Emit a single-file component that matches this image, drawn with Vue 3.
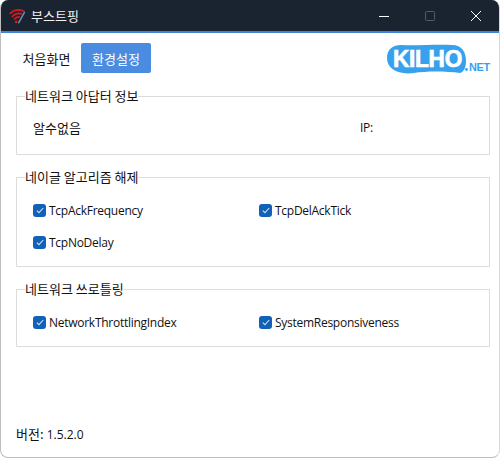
<script setup>
const nagle = ['TcpAckFrequency', 'TcpDelAckTick', 'TcpNoDelay']
const throttle = ['NetworkThrottlingIndex', 'SystemResponsiveness']
</script>

<template>
  <div class="window">
    <header class="titlebar">
      <svg class="app-icon" width="17" height="17" viewBox="0 0 20 20" fill="none">
        <path d="M1.5 7.5C6 3 12 2.5 17.5 5" stroke="#d8181f" stroke-width="2.2" stroke-linecap="round" />
        <path d="M4 11C7.5 7.5 11 7 14.5 8" stroke="#d8181f" stroke-width="2.2" stroke-linecap="round" />
        <path d="M6.5 14C8.5 12 10 11.5 12 11.5" stroke="#d8181f" stroke-width="2" stroke-linecap="round" />
        <circle cx="8.5" cy="17.5" r="1.7" fill="#d8181f" />
        <path d="M18 6.5L11.5 18.5" stroke="#6f8ba8" stroke-width="1.8" stroke-linecap="round" />
      </svg>
      <span class="app-title">부스트핑</span>
      <div class="controls">
        <span class="ctl"><svg width="12" height="12" viewBox="0 0 12 12"><path d="M1 6.5H11" stroke="#fff" /></svg></span>
        <span class="ctl"><svg width="12" height="12" viewBox="0 0 12 12"><rect x="1.5" y="1.5" width="9" height="9" rx="1" fill="none" stroke="#555b63" /></svg></span>
        <span class="ctl"><svg width="12" height="12" viewBox="0 0 12 12"><path d="M1 1L11 11M11 1L1 11" stroke="#fff" /></svg></span>
      </div>
    </header>

    <main class="content">
      <nav class="tabs">
        <span class="tab">처음화면</span>
        <span class="tab active">환경설정</span>
        <svg class="logo" width="106" height="32" viewBox="0 0 106 32">
          <path d="M1 15C1 6 7 2 15 2C30 3 50 1 66 2C76 2 80 9 80 18C80 24 78 29 74 30C60 28 40 28 28 30C12 32 1 26 1 15Z" fill="#36a2ee" />
          <text class="logo-main" x="7" y="24" textLength="69" lengthAdjust="spacingAndGlyphs">KILHO</text>
          <circle cx="80.5" cy="26.5" r="1.4" fill="#36a2ee" />
          <text class="logo-net" x="83" y="28" textLength="21" lengthAdjust="spacingAndGlyphs">NET</text>
        </svg>
      </nav>

      <fieldset class="group adapter">
        <legend>네트워크 아답터 정보</legend>
        <div class="row">
          <span class="cell">알수없음</span>
          <span class="ip">IP:</span>
        </div>
      </fieldset>

      <fieldset class="group nagle">
        <legend>네이글 알고리즘 해제</legend>
        <div class="grid">
          <label v-for="n in nagle" :key="n" class="check">
            <span class="box"><svg width="8" height="7" viewBox="0 0 8 7"><path d="M.8 3.6L3 5.7L7.2 1" fill="none" stroke="#cfe0f3" stroke-width="1.1" /></svg></span>{{ n }}
          </label>
        </div>
      </fieldset>

      <fieldset class="group throttle">
        <legend>네트워크 쓰로틀링</legend>
        <div class="grid">
          <label v-for="n in throttle" :key="n" class="check">
            <span class="box"><svg width="8" height="7" viewBox="0 0 8 7"><path d="M.8 3.6L3 5.7L7.2 1" fill="none" stroke="#cfe0f3" stroke-width="1.1" /></svg></span>{{ n }}
          </label>
        </div>
      </fieldset>

      <footer class="version"><span class="ko">버전:</span> 1.5.2.0</footer>
    </main>
  </div>
</template>

<style>
html, body { margin: 0; background: #fff; }
</style>

<style scoped>
.window {
  width: 500px;
  height: 458px;
  box-sizing: border-box;
  display: flex;
  flex-direction: column;
  border-radius: 8px;
  border-left: 1px solid #bdbdbd;
  border-right: 1px solid #d8d8d8;
  border-bottom: 1px solid #bdbdbd;
  overflow: hidden;
  background: #fff;
  color: #111;
  font-family: "Open Sans", "Noto Sans CJK KR", sans-serif;
  font-size: 12px;
  letter-spacing: -.27px;
}
.titlebar {
  height: 31px;
  flex: none;
  display: flex;
  align-items: center;
  background: #1a2330;
  border-bottom: 2px solid #3d85d8;
  padding-left: 8px;
}
.app-icon { flex: none; }
.app-title {
  margin-left: 5px;
  color: #f2f2f2;
  font-size: 13px;
  letter-spacing: 0;
  font-family: "Noto Sans CJK KR", sans-serif;
}
.controls { margin-left: auto; display: flex; height: 100%; }
.ctl { width: 46px; display: flex; align-items: center; justify-content: center; }
.content {
  flex: 1;
  display: flex;
  flex-direction: column;
  padding: 10px 9px 0 15px;
  min-height: 0;
}
.tabs { display: flex; align-items: center; height: 30px; }
.tab {
  display: flex;
  align-items: center;
  justify-content: center;
  height: 100%;
  box-sizing: border-box;
  font-family: "Noto Sans CJK KR", sans-serif;
  font-size: 13px;
  letter-spacing: 0;
}
.tab:first-child { width: 65px; margin-left: -2px; margin-right: 2px; }
.tab.active { width: 70px; background: #4a8ce0; color: #fff; border-radius: 2px; }
.logo { margin-left: auto; margin-top: 1px; margin-right: -2px; }
.logo-main {
  fill: #fff;
  stroke: #fff;
  stroke-width: .7px;
  font: 700 23px "Liberation Sans", sans-serif;
}
.logo-net {
  fill: #36a2ee;
  font: 700 11px "Liberation Sans", sans-serif;
}
.group {
  margin: 0;
  padding: 0 16px;
  border: 1px solid #dcdcdc;
  min-width: 0;
  box-sizing: border-box;
}
.group legend {
  padding: 0;
  margin-left: -8px;
  font-family: "Noto Sans CJK KR", sans-serif;
  font-size: 13px;
  line-height: 16px;
  letter-spacing: 0;
}
.adapter { margin-top: 15px; height: 67px; }
.nagle { margin-top: 14px; height: 98px; }
.throttle { margin-top: 14px; height: 66px; }
.row { display: flex; align-items: center; padding-top: 16px; }
.cell { width: 327px; font-family: "Noto Sans CJK KR", sans-serif; font-size: 13px; letter-spacing: 0; line-height: 16px; }
.ip { line-height: 16px; }
.grid { display: grid; grid-template-columns: 226px 1fr; grid-auto-rows: 32px; padding-top: 10px; }
.check { display: flex; align-items: center; height: 16px; margin-top: 7px; }
.box {
  width: 13px;
  height: 13px;
  border-radius: 3px;
  background: #0f62b8;
  display: flex;
  align-items: center;
  justify-content: center;
  margin-right: 3px;
  flex: none;
}
.version { margin-top: auto; margin-bottom: 14px; font-size: 12px; letter-spacing: 0; }
.ko { font-family: "Noto Sans CJK KR", sans-serif; font-size: 13px; }
</style>
